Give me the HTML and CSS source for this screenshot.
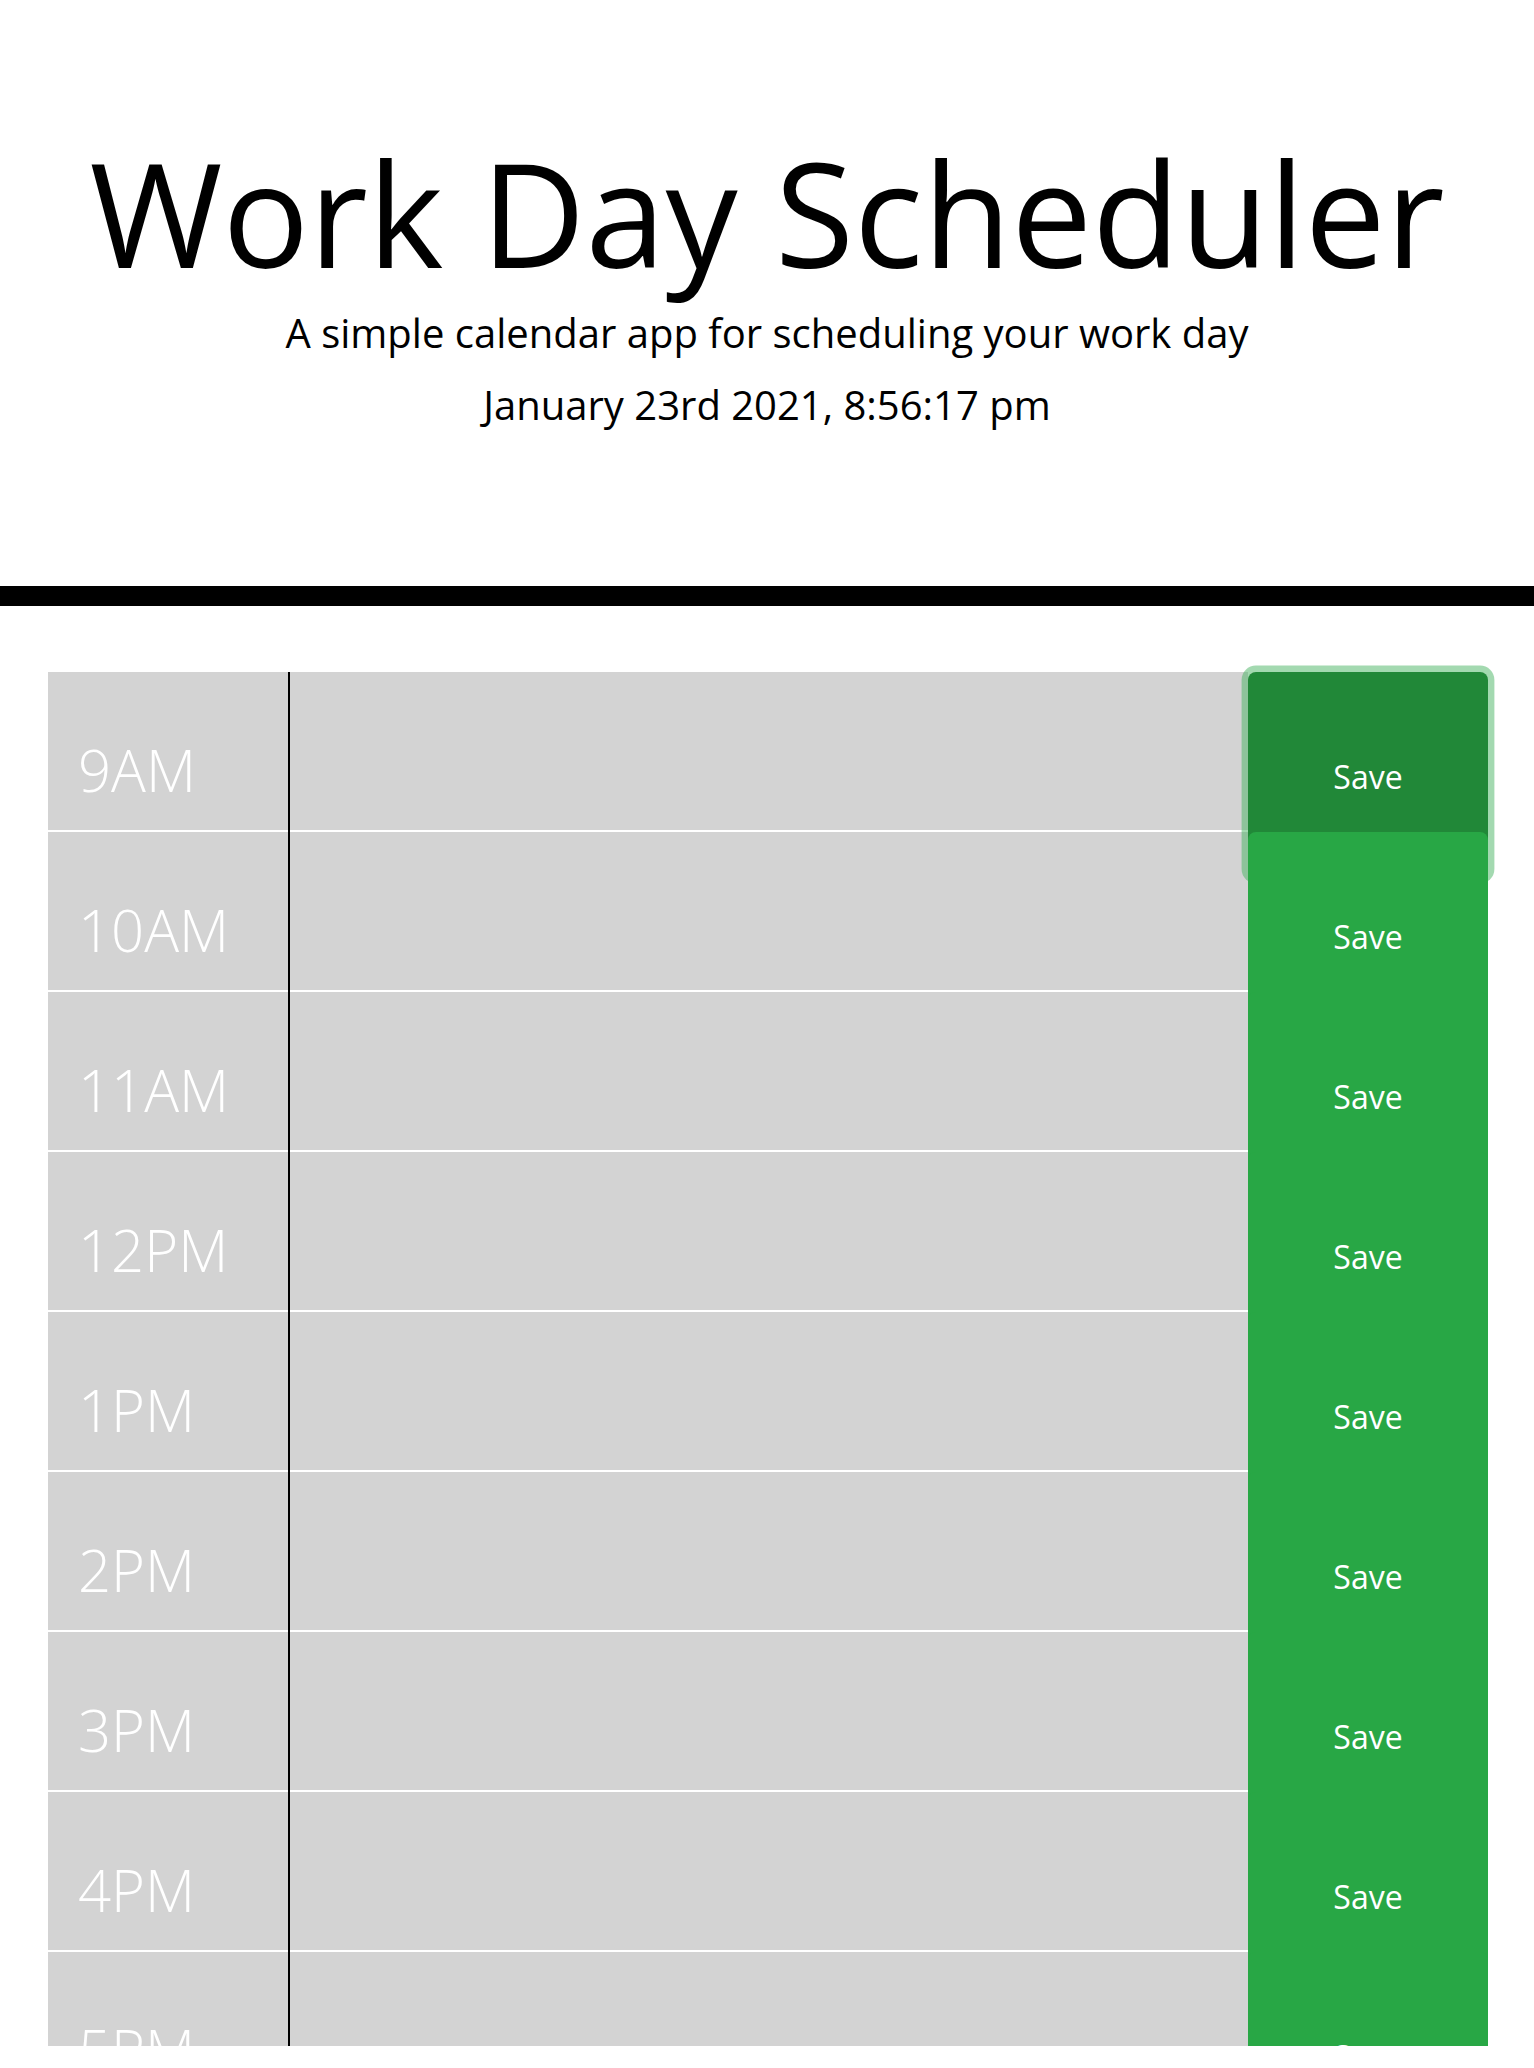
FILE: index.html
```html
<!DOCTYPE html>
<html lang="en">
<head>
<meta charset="utf-8">
<title>Work Day Scheduler</title>
<link rel="stylesheet" href="styles.css">
</head>
<body>
<header class="jumbotron">
  <h1 class="display-title">Work Day Scheduler</h1>
  <p class="lead">A simple calendar app for scheduling your work day</p>
  <p class="lead current-day">January 23rd 2021, 8:56:17 pm</p>
</header>
<main class="schedule">
  <div class="container">
    <div class="time-block"><div class="hour">9AM</div><div class="divider"></div><div class="description"></div><button class="save-btn is-focused">Save</button></div>
    <div class="time-block"><div class="hour">10AM</div><div class="divider"></div><div class="description"></div><button class="save-btn">Save</button></div>
    <div class="time-block"><div class="hour">11AM</div><div class="divider"></div><div class="description"></div><button class="save-btn">Save</button></div>
    <div class="time-block"><div class="hour">12PM</div><div class="divider"></div><div class="description"></div><button class="save-btn">Save</button></div>
    <div class="time-block"><div class="hour">1PM</div><div class="divider"></div><div class="description"></div><button class="save-btn">Save</button></div>
    <div class="time-block"><div class="hour">2PM</div><div class="divider"></div><div class="description"></div><button class="save-btn">Save</button></div>
    <div class="time-block"><div class="hour">3PM</div><div class="divider"></div><div class="description"></div><button class="save-btn">Save</button></div>
    <div class="time-block"><div class="hour">4PM</div><div class="divider"></div><div class="description"></div><button class="save-btn">Save</button></div>
    <div class="time-block"><div class="hour">5PM</div><div class="divider"></div><div class="description"></div><button class="save-btn">Save</button></div>
  </div>
</main>
</body>
</html>
```

FILE: styles.css
```css
html, body {
  margin: 0;
  padding: 0;
  background: #fff;
}

body {
  font-family: "Open Sans", "Liberation Sans", sans-serif;
  color: #000;
}

.jumbotron {
  text-align: center;
  padding-top: 126px;
  padding-bottom: 151px;
  border-bottom: 20px solid #000;
}

.display-title {
  margin: 0;
  font-size: 144px;
  line-height: 172px;
  font-weight: 400;
}

.lead {
  margin: 5px 0 0;
  font-size: 40px;
  line-height: 60px;
  font-weight: 400;
}

.lead.current-day {
  margin-top: 12px;
}

.schedule {
  box-sizing: border-box;
  height: 1440px;
  padding-top: 66px;
  overflow: hidden;
}

.container {
  width: 1440px;
  margin-left: 48px;
}

.time-block {
  display: flex;
  height: 160px;
}

.hour {
  box-sizing: border-box;
  width: 240px;
  height: 160px;
  flex: none;
  background: #d3d3d3;
  border-bottom: 2px solid #fff;
  color: #fff;
  font-size: 58px;
  line-height: 90px;
  font-weight: 300;
  padding: 53px 0 0 30px;
}

.divider {
  width: 2px;
  flex: none;
  background: #000;
}

.description {
  box-sizing: border-box;
  flex: 1;
  height: 160px;
  background: #d3d3d3;
  border-bottom: 2px solid #fff;
}

.save-btn {
  position: relative;
  box-sizing: border-box;
  flex: none;
  align-self: flex-start;
  width: 240px;
  height: 205px;
  margin: 0;
  padding: 4px 0 0;
  border: none;
  border-radius: 8px;
  background: #28a745;
  color: #fff;
  font-family: "Open Sans", "Liberation Sans", sans-serif;
  font-size: 32px;
  line-height: 48px;
  font-weight: 400;
  text-align: center;
}

.save-btn.is-focused {
  background: #218838;
  box-shadow: 0 0 0 6.4px rgba(72, 180, 97, 0.5);
}
```
